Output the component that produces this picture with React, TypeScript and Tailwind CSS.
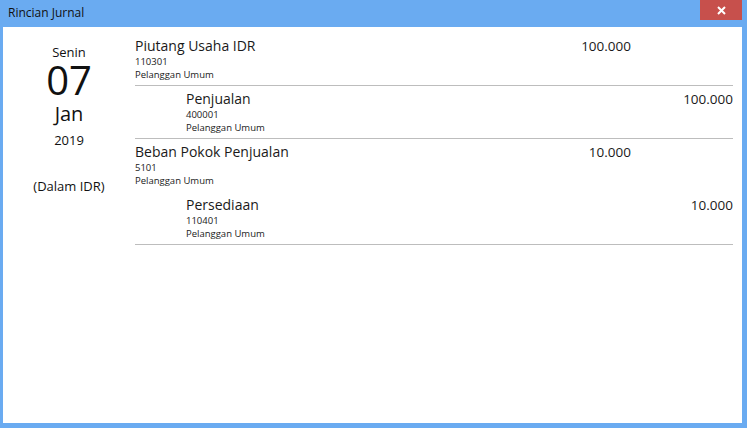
import React from 'react';

type Line = {
  name: string;
  code: string;
  party: string;
  amount: string;
  credit?: boolean;
  divider: boolean;
};

const lines: Line[] = [
  { name: 'Piutang Usaha IDR', code: '110301', party: 'Pelanggan Umum', amount: '100.000', divider: true },
  { name: 'Penjualan', code: '400001', party: 'Pelanggan Umum', amount: '100.000', credit: true, divider: true },
  { name: 'Beban Pokok Penjualan', code: '5101', party: 'Pelanggan Umum', amount: '10.000', divider: false },
  { name: 'Persediaan', code: '110401', party: 'Pelanggan Umum', amount: '10.000', credit: true, divider: true },
];

function JournalRow({ line }: { line: Line }) {
  return (
    <div
      className={`flex pt-[4px] pb-[4px] border-b ${line.divider ? 'border-[#bdbdbd]' : 'border-transparent'}`}
    >
      <div className={`flex-1 flex flex-col ${line.credit ? 'pl-[51px]' : ''}`}>
        <span className="text-[14px] leading-[18px] text-[#1a1a1a]">{line.name}</span>
        <span className="text-[9.5px] leading-[13px] text-[#1a1a1a]">{line.code}</span>
        <span className="text-[9.5px] leading-[13px] text-[#1a1a1a]">{line.party}</span>
      </div>
      <div className="w-[100px] text-right text-[13.5px] leading-[18px] text-[#1a1a1a]">
        {line.credit ? '' : line.amount}
      </div>
      <div className="w-[102px] text-right text-[13.5px] leading-[18px] text-[#1a1a1a]">
        {line.credit ? line.amount : ''}
      </div>
    </div>
  );
}

export default function App() {
  return (
    <div
      className="w-[747px] h-[428px] bg-[#6aabf1] flex flex-col pl-[3px] pr-[5px] pb-[5px] overflow-hidden"
      style={{ fontFamily: '"Open Sans", "Noto Sans", sans-serif' }}
    >
      {/* Title bar */}
      <div className="h-[27px] flex items-start justify-between">
        <span className="pl-[5px] pt-[5px] text-[12px] leading-[16px] text-[#111]">Rincian Jurnal</span>
        <button className="w-[42px] h-[20px] bg-[#c7504c] flex items-center justify-center">
          <svg width="9" height="9" viewBox="0 0 9 9">
            <path d="M1 1L8 8M8 1L1 8" stroke="white" strokeWidth="2" />
          </svg>
        </button>
      </div>

      {/* Body */}
      <div className="flex-1 bg-white flex">
        <div className="w-[132px] flex flex-col items-center text-[#111]">
          <span className="mt-[17px] text-[13px] leading-[16px]">Senin</span>
          <span className="text-[40px] leading-[40px]">07</span>
          <span className="mt-[2px] text-[20px] leading-[24px]">Jan</span>
          <span className="mt-[6px] text-[13px] leading-[16px]">2019</span>
          <span className="mt-[30px] text-[13px] leading-[16px]">(Dalam IDR)</span>
        </div>
        <div className="flex-1 pt-[6px] pr-[9px]">
          {lines.map((l) => (
            <JournalRow key={l.name} line={l} />
          ))}
        </div>
      </div>
    </div>
  );
}
